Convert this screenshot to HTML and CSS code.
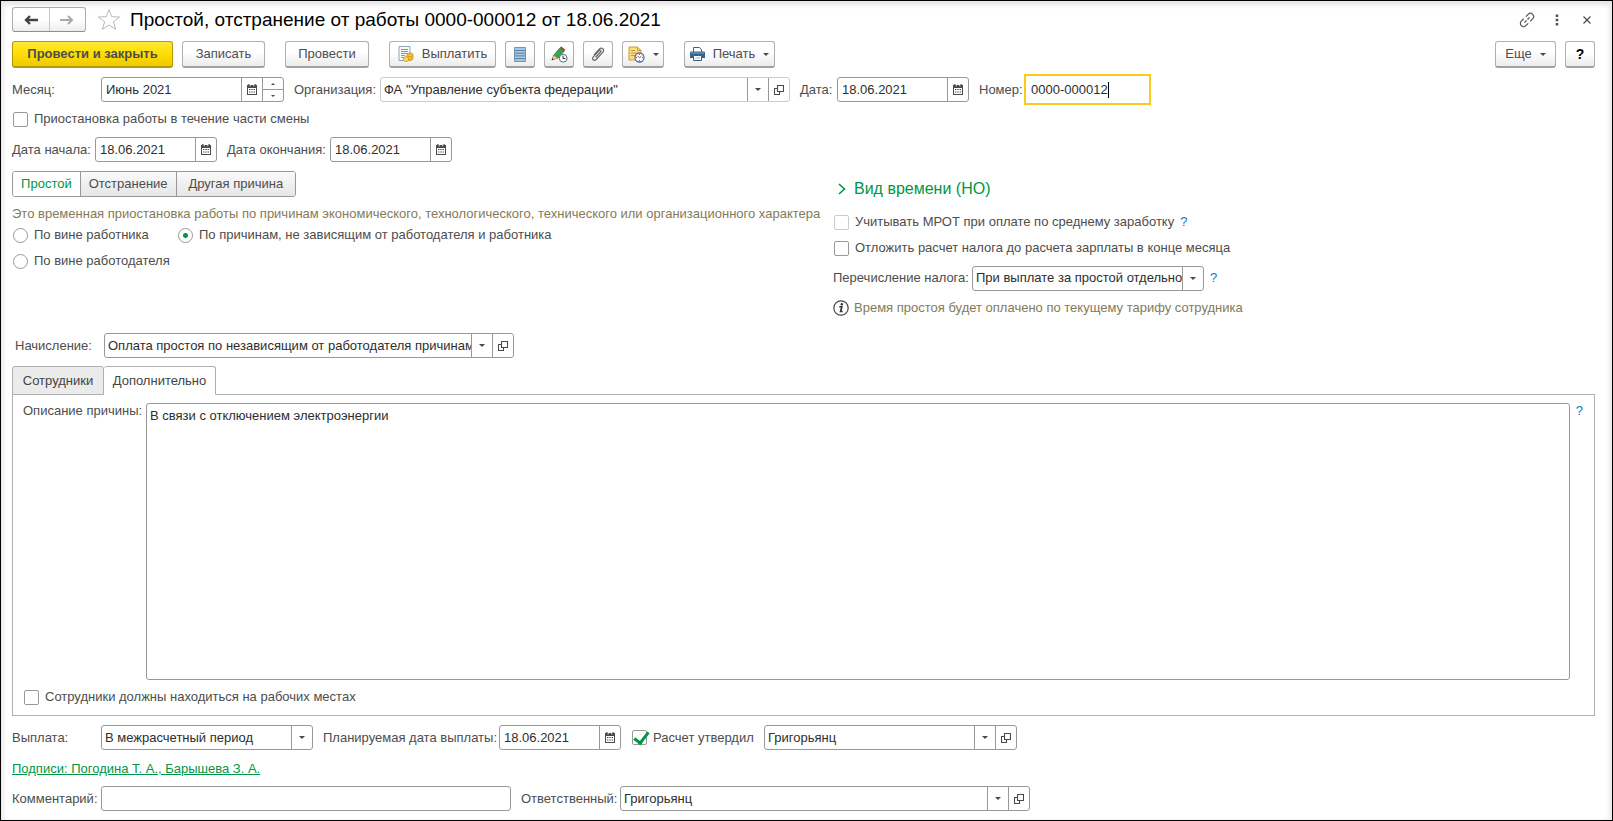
FILE: index.html
```html
<!DOCTYPE html>
<html lang="ru">
<head>
<meta charset="utf-8">
<title>Простой, отстранение от работы 0000-000012 от 18.06.2021</title>
<link rel="stylesheet" href="styles.css">
</head>
<body>
<svg class="sprite" aria-hidden="true">
  <symbol id="cal" viewBox="0 0 10 11"><path d="M0 1h10v10H0z" fill="#4a4a4a"/><path d="M1 4h8v6H1z" fill="#fff"/><path d="M2 0v3M8 0v3" stroke="#4a4a4a" stroke-width="1.4"/><path d="M3.2 0v2.4M6.8 0v2.4" stroke="#fff" stroke-width=".8"/><path d="M2 5.5h1.4M4.3 5.5h1.4M6.6 5.5H8M2 8h1.4M4.3 8h1.4M6.6 8H8" stroke="#4a4a4a" stroke-width="1.2"/></symbol>
  <symbol id="open" viewBox="0 0 10 10"><path d="M3.500 .5h6v6h-6zM3 3.500H.5v6h5V7" fill="none" stroke="#4a4a4a" stroke-width="1.100"/></symbol>
  <symbol id="down" viewBox="0 0 6 3"><path d="M0 0h6L3 3z" fill="#4a4a4a"/></symbol>
  <symbol id="up" viewBox="0 0 6 3"><path d="M0 3h6L3 0z" fill="#4a4a4a"/></symbol>
</svg>
<main class="window">
  <header class="titlebar">
    <div class="nav">
      <button type="button" aria-label="Назад"><svg width="14" height="10" viewBox="0 0 14 10"><path d="M14 5H2M6 1 2 5l4 4" fill="none" stroke="#444" stroke-width="2.400"/></svg></button>
      <button type="button" aria-label="Вперед"><svg width="14" height="10" viewBox="0 0 14 10"><path d="M0 5h12M8 1l4 4-4 4" fill="none" stroke="#aaa" stroke-width="2"/></svg></button>
    </div>
    <button class="plain" type="button" aria-label="В избранное"><svg width="24" height="23" viewBox="0 0 24 23"><path d="M12 1.500l2.700 7.200 7.900.3-6.200 4.800 2.200 7.500L12 17l-6.600 4.300 2.200-7.500L1.400 9l7.900-.3z" fill="#fff" stroke="#b4bac0"/></svg></button>
    <h1>Простой, отстранение от работы 0000-000012 от 18.06.2021</h1>
    <div class="tools">
      <button class="plain" type="button" aria-label="Ссылка"><svg width="16" height="16" viewBox="0 0 16 16"><g fill="none" stroke="#555" stroke-width="1.200" transform="rotate(-45 8 8)"><path d="M6.500 4.800H3.200a3.200 3.200 0 0 0 0 6.400h3.300M9.500 4.800h3.300a3.200 3.200 0 0 1 0 6.400H9.500M4.500 8h2.800M8.700 8h2.800"/></g></svg></button>
      <button class="plain" type="button" aria-label="Меню"><svg width="4" height="12" viewBox="0 0 4 12"><path d="M.7.500h2.600v2.500H.7zM.7 4.700h2.600v2.500H.7zM.7 9h2.600v2.500H.7z" fill="#555"/></svg></button>
      <button class="plain" type="button" aria-label="Закрыть"><svg width="8" height="8" viewBox="0 0 8 8"><path d="M.5.500l7 7m0-7l-7 7" stroke="#444" stroke-width="1.100"/></svg></button>
    </div>
  </header>

  <div class="toolbar">
    <button class="btn main w-main" type="button">Провести и закрыть</button>
    <button class="btn w-btn" type="button">Записать</button>
    <button class="btn w-post split" type="button">Провести</button>
    <button class="btn w-pay split" type="button"><svg width="16" height="16" viewBox="0 0 16 16"><path d="M1 .5h11v14H1z" fill="#f7fafc" stroke="#8fa3b5"/><path d="M3 3.500h7M3 5.500h7M3 7.500h7M3 9.500h4M3 11.500h4" stroke="#7d98b0"/><path d="M9 8.500c0-2 6-2 6 0V13c-1 2-5 2-6 0z" fill="#f0bd2d" stroke="#c58f13" stroke-width=".7"/><path d="M5.500 12c0-1.600 5-1.600 5 0v2c0 2-5 2-5 0z" fill="#ffd84c" stroke="#c58f13" stroke-width=".7"/><path d="M9.500 10c1.500 1 4 1 5.200 0" stroke="#c58f13" fill="none" stroke-width=".7"/></svg>Выплатить</button>
    <button class="btn w-icon" type="button" aria-label="Список"><svg width="12" height="15" viewBox="0 0 12 15"><path d="M.5.500h11v14H.5z" fill="#a9c9e0" stroke="#6f97b5"/><path d="M1 3.500h10M1 6.200h10M1 8.900h10M1 11.600h10" stroke="#5683a5"/></svg></button>
    <button class="btn w-icon" type="button" aria-label="Изменить"><svg width="17" height="17" viewBox="0 0 17 17"><path d="M2.500 9.500L9 1.800l4.200 3.400L7 12z" fill="#3fa14b" stroke="#27803a" stroke-width=".8"/><path d="M9 1.800L10.300.5l4 3.200-1.100 1.500z" fill="#9b3b32"/><path d="M2.500 9l4.200 3.200L1 14z" fill="#efd09a" stroke="#936d38" stroke-width=".6"/><path d="M.6 14.300l.8-2.300 1.600 1.500z" fill="#333"/><circle cx="12.200" cy="12.200" r="3.900" fill="#fff" stroke="#4f7184"/><path d="M12 9.700v2.800h2.300" fill="none" stroke="#333"/></svg></button>
    <button class="btn w-icon" type="button" aria-label="Файлы"><svg width="14" height="15" viewBox="0 0 14 15"><path d="M4.500 10.500l5-5.500c1.200-1.300-.2-2.600-1.400-1.400L2.300 9.800c-2 2.300.8 4.800 2.900 2.700l6.500-7.100c2.400-2.700-.9-5.900-3.500-3.200L3 7.800" fill="none" stroke="#666" stroke-width="1.200"/></svg></button>
    <button class="btn w-drop" type="button" aria-label="Задача"><svg width="17" height="17" viewBox="0 0 17 17"><path d="M1 1h8.500l3.500 3.500V14H1z" fill="#f9dd83" stroke="#c99b36"/><path d="M9.500 1v3.500H13M3 4.500h4M3 7h7M3 9.500h4" fill="none" stroke="#c99b36"/><circle cx="11.500" cy="11.500" r="4.500" fill="#fff" stroke="#4774b5" stroke-width="1.300"/><path d="M11.500 8v1M11.500 14v1M8 11.500h1M14 11.500h1" stroke="#4774b5"/><path d="M11.500 11.800l-1.800-2M11.500 11.800l2-1.800" stroke="#d33"/></svg><svg class="tri" width="6" height="3"><use href="#down"/></svg></button>
    <button class="btn w-print split" type="button"><svg width="15" height="14" viewBox="0 0 15 14"><path d="M3.500.500h6l2 2V6h-8z" fill="#fff" stroke="#376188"/><path d="M1 4.500h13q1 0 1 1V11H0V5.500q0-1 1-1z" fill="#37648e"/><path d="M1 6h13" stroke="#7fa3c2"/><path d="M3.500 8.500h8v5h-8z" fill="#fff" stroke="#376188"/><path d="M5 11h5" stroke="#a9b9c8"/></svg>Печать<svg class="tri" width="6" height="3"><use href="#down"/></svg></button>
    <span class="grow"></span>
    <button class="btn w-more" type="button">Еще<svg class="tri" width="6" height="3"><use href="#down"/></svg></button>
    <button class="btn w-icon help-btn" type="button">?</button>
  </div>

  <div class="row">
    <label class="lab" for="month">Месяц:</label>
    <div class="field f-month"><input id="month" value="Июнь 2021"><button type="button" aria-label="Календарь"><svg width="10" height="11"><use href="#cal"/></svg></button><span class="spin"><button type="button" aria-label="Больше"><svg width="4" height="2" viewBox="0 0 4 2"><path d="M0 2h4L2 0z" fill="#4a4a4a"/></svg></button><button type="button" aria-label="Меньше"><svg width="4" height="2" viewBox="0 0 4 2"><path d="M0 0h4L2 2z" fill="#4a4a4a"/></svg></button></span></div>
    <label class="l-org" for="org">Организация:</label>
    <div class="field f-wide pale"><span class="pick"><select id="org"><option>ФА "Управление субъекта федерации"</option></select><svg width="6" height="3"><use href="#down"/></svg></span><button type="button" aria-label="Открыть"><svg width="10" height="10"><use href="#open"/></svg></button></div>
    <label class="l-date" for="date">Дата:</label>
    <div class="field f-docdate"><input id="date" value="18.06.2021"><button type="button" aria-label="Календарь"><svg width="10" height="11"><use href="#cal"/></svg></button></div>
    <label class="l-num" for="num">Номер:</label>
    <div class="focus"><input id="num" value="0000-000012" size="10"><i class="caret"></i></div>
  </div>

  <div class="row check-row"><label class="check"><input type="checkbox">Приостановка работы в течение части смены</label></div>

  <div class="row dates">
    <label class="l-from" for="from">Дата начала:</label>
    <div class="field f-date"><input id="from" value="18.06.2021"><button type="button" aria-label="Календарь"><svg width="10" height="11"><use href="#cal"/></svg></button></div>
    <label class="l-to" for="to">Дата окончания:</label>
    <div class="field f-date"><input id="to" value="18.06.2021"><button type="button" aria-label="Календарь"><svg width="10" height="11"><use href="#cal"/></svg></button></div>
  </div>

  <div class="columns">
    <section class="reason">
      <div class="segments"><button class="on" type="button">Простой</button><button type="button">Отстранение</button><button type="button">Другая причина</button></div>
      <p class="note">Это временная приостановка работы по причинам экономического, технологического, технического или организационного характера</p>
      <div class="radios">
        <label class="check"><input type="radio" name="fault">По вине работника</label>
        <label class="check"><input type="radio" name="fault" checked>По причинам, не зависящим от работодателя и работника</label>
        <label class="check"><input type="radio" name="fault">По вине работодателя</label>
      </div>
    </section>
    <section class="options">
      <h2><button class="plain" type="button"><svg width="8" height="12" viewBox="0 0 8 12"><path d="M1 1l5.500 5L1 11" fill="none" stroke="#009646" stroke-width="1.600"/></svg>Вид времени (НО)</button></h2>
      <div class="line"><label class="check"><input type="checkbox" disabled>Учитывать МРОТ при оплате по среднему заработку</label><a href="#" class="hint">?</a></div>
      <div class="line"><label class="check"><input type="checkbox">Отложить расчет налога до расчета зарплаты в конце месяца</label></div>
      <div class="line tall"><label class="l-tax" for="tax">Перечисление налога:</label><div class="field f-tax"><span class="pick"><select id="tax"><option>При выплате за простой отдельно</option></select><svg width="6" height="3"><use href="#down"/></svg></span></div><a href="#" class="hint">?</a></div>
      <div class="line info"><svg width="16" height="16" viewBox="0 0 16 16"><circle cx="8" cy="8" r="7.200" fill="#fff" stroke="#444" stroke-width="1.200"/><circle cx="8.800" cy="4.300" r="1.200" fill="#333"/><path d="M6.300 6.800h2.500L7.600 11.500h2" fill="none" stroke="#333" stroke-width="1.600"/></svg>Время простоя будет оплачено по текущему тарифу сотрудника</div>
    </section>
  </div>

  <div class="row accrual">
    <label class="lab" for="accrual">Начисление:</label>
    <div class="field f-wide"><span class="pick"><select id="accrual"><option>Оплата простоя по независящим от работодателя причинам</option></select><svg width="6" height="3"><use href="#down"/></svg></span><button type="button" aria-label="Открыть"><svg width="10" height="10"><use href="#open"/></svg></button></div>
  </div>

  <div class="tabs"><button class="t-staff" type="button">Сотрудники</button><button class="t-extra on" type="button">Дополнительно</button></div>
  <section class="panel">
    <div class="describe">
      <label for="desc">Описание причины:</label>
      <textarea id="desc">В связи с отключением электроэнергии</textarea>
      <a href="#" class="hint">?</a>
    </div>
    <label class="check"><input type="checkbox">Сотрудники должны находиться на рабочих местах</label>
  </section>

  <div class="row">
    <label class="lab" for="pay">Выплата:</label>
    <div class="field f-pay"><span class="pick"><select id="pay"><option>В межрасчетный период</option></select><svg width="6" height="3"><use href="#down"/></svg></span></div>
    <label class="l-plan" for="plan">Планируемая дата выплаты:</label>
    <div class="field f-date"><input id="plan" value="18.06.2021"><button type="button" aria-label="Календарь"><svg width="10" height="11"><use href="#cal"/></svg></button></div>
    <label class="check l-ok"><input type="checkbox" checked>Расчет утвердил</label>
    <div class="field f-appr"><span class="pick"><select aria-label="Расчет утвердил"><option>Григорьянц</option></select><svg width="6" height="3"><use href="#down"/></svg></span><button type="button" aria-label="Открыть"><svg width="10" height="10"><use href="#open"/></svg></button></div>
  </div>
  <a href="#" class="sign">Подписи: Погодина Т. А., Барышева З. А.</a>
  <div class="row">
    <label class="lab" for="comment">Комментарий:</label>
    <div class="field f-wide"><input id="comment"></div>
    <label class="l-resp" for="resp">Ответственный:</label>
    <div class="field f-wide"><span class="pick"><select id="resp"><option>Григорьянц</option></select><svg width="6" height="3"><use href="#down"/></svg></span><button type="button" aria-label="Открыть"><svg width="10" height="10"><use href="#open"/></svg></button></div>
  </div>
</main>
</body>
</html>
```

FILE: styles.css
```css
* { box-sizing: border-box; }
body { margin: 0; background: #fff; }
body, button, input, select, textarea { font: 13px/16px "Liberation Sans", Arial, sans-serif; color: #4d4d4d; }
.sprite { position: absolute; width: 0; height: 0; }
svg { display: block; flex: none; }
button { padding: 0; margin: 0; cursor: pointer; }
label { white-space: nowrap; flex: none; }

.window {
  min-height: 100vh;
  display: flex;
  flex-direction: column;
  padding: 6px 17px 9px 11px;
  border: 1px solid #000;
  box-shadow: inset 0 7px 5px -3px #e6e4e6, inset 4px 0 4px -1px #eeecee, inset -4px 0 4px -1px #e9e9ef;
}
.plain { border: 0; background: none; display: flex; align-items: center; }

.titlebar { display: flex; align-items: center; height: 25px; }
.nav { display: flex; height: 25px; width: 74px; border: 1px solid #adadad; border-bottom-color: #8f8f8f; border-radius: 3px; background: linear-gradient(#fff 50%, #ededed); }
.nav button { flex: 1; display: flex; align-items: center; justify-content: center; border: 0; background: none; }
.nav button + button { border-left: 1px solid #c8c8c8; }
.titlebar > .plain { margin-left: 11px; }
h1 { margin: 0 0 0 9px; font-size: 19px; line-height: 24px; font-weight: 400; color: #000; white-space: nowrap; }
.tools { display: flex; align-items: center; gap: 20px; margin-left: auto; padding-right: 4px; }
.tools .plain:last-child { margin-left: 4px; }

.toolbar { display: flex; gap: 9px; margin-top: 9px; }
.btn { display: flex; align-items: center; justify-content: center; gap: 8px; height: 27px; flex: none; border: 1px solid #b0b0b0; border-bottom: 2px solid #a0a0a0; border-radius: 3px; background: linear-gradient(#fff 40%, #ececec); }
.btn.main { background: linear-gradient(#ffe834, #fddc00 55%, #ecca00); border-color: #b39a0b; font-weight: 700; }
.split { margin-left: 11px; }
.w-main { width: 161px; }
.w-btn { width: 83px; }
.w-post { width: 84px; }
.w-pay { width: 107px; }
.w-icon { width: 30px; }
.w-drop { width: 42px; }
.w-print { width: 91px; }
.w-more { width: 61px; }
.help-btn { color: #000; font-weight: 700; font-size: 14px; }
.grow { flex: 1; }

.row { display: flex; align-items: center; height: 25px; margin-top: 9px; flex: none; }
.row .field + label { margin-left: 10px; }
.lab { width: 89px; }
.l-org { width: 86px; }
.l-date { width: 37px; }
.l-num { width: 45px; }
.l-from { width: 83px; }
.l-to { width: 103px; }
.l-plan { width: 176px; }
.l-resp { width: 99px; }
.l-ok { width: 133px; }
.l-tax { width: 139px; }

.field { display: flex; height: 25px; flex: none; border: 1px solid #999; border-radius: 3px; background: #fff; overflow: hidden; }
.pale { border-color: #ccc; }
.field > input, .pick { flex: 1; min-width: 0; }
.field input, select { border: 0; outline: 0; background: none; color: #2e2e2e; padding: 0 4px; height: 100%; }
.field > button { width: 21px; flex: none; border: 0; border-left: 1px solid #999; background: none; display: flex; align-items: center; justify-content: center; }
.pick { display: grid; grid-template-columns: minmax(0, 1fr) 21px; }
.pick select { grid-area: 1 / 1; appearance: none; min-width: 0; width: 100%; padding: 0 0 0 3px; }
.pick svg { grid-area: 1 / 2; place-self: center; }
.pick::after { content: ""; grid-area: 1 / 2; border-left: 1px solid #999; pointer-events: none; }
.spin { width: 21px; display: flex; flex-direction: column; border-left: 1px solid #999; }
.spin button { flex: 1; border: 0; background: none; display: flex; align-items: center; justify-content: center; }
.spin button + button { border-top: 1px solid #999; }
.f-month { width: 183px; }
.f-wide { width: 410px; }
.f-docdate { width: 132px; }
.f-date { width: 122px; }
.f-tax { width: 232px; }
.f-pay { width: 212px; }
.f-appr { width: 253px; }
.focus { display: flex; align-items: center; width: 127px; height: 31px; border: 2px solid #fbcb1b; padding-left: 5px; }
.focus input { border: 0; outline: 0; padding: 0; background: none; color: #2e2e2e; field-sizing: content; }
.caret { width: 1px; height: 16px; background: #000; }

.check { display: flex; align-items: center; gap: 6px; }
.check input { appearance: none; flex: none; width: 15px; height: 15px; margin: 0 0 0 1px; border: 1px solid #999; border-radius: 2px; background: #fff; }
.check input[type="radio"] { border-radius: 50%; }
.check input[type="radio"]:checked { background: radial-gradient(circle, #009646 2px, #fff 3px); }
.check input:disabled { border-color: #ccc; }
.check input[type="checkbox"]:checked { position: relative; }
.check input[type="checkbox"]:checked::after { content: ""; position: absolute; left: 4px; top: -2px; width: 6px; height: 12px; border: solid #009646; border-width: 0 3px 3px 0; transform: rotate(38deg); }
.check-row { height: 16px; }
.dates { margin-top: 10px; }

.columns { display: flex; gap: 20px; margin-top: 9px; height: 154px; flex: none; }
.reason { width: 801px; flex: none; }
.segments { display: flex; height: 26px; width: 284px; border: 1px solid #999; border-radius: 3px; overflow: hidden; }
.segments button { flex: 88 1 0; border: 0; border-left: 1px solid #999; background: linear-gradient(#fafafa, #e6e6e6); }
.segments button:first-child { flex-grow: 62; border-left: 0; }
.segments button:last-child { flex-grow: 110; }
.segments .on { background: #fff; color: #009646; }
.note { margin: 9px 0 0; color: #857a58; white-space: nowrap; }
.radios { display: grid; grid-template-columns: 165px 1fr; row-gap: 10px; margin-top: 5px; }
h2 { margin: 6px 0 8px; font-size: 16px; font-weight: 400; }
h2 .plain { font-size: 16px; line-height: 24px; color: #009646; gap: 8px; padding-left: 5px; }
.options .line { display: flex; align-items: center; height: 26px; white-space: nowrap; }
.options .tall { height: 34px; }
.options .info { gap: 5px; color: #857a58; }
.hint { color: #0a78c8; text-decoration: none; margin-left: 6px; }

.accrual { margin-top: 8px; padding-left: 3px; }
.tabs { display: flex; margin-top: 8px; height: 29px; flex: none; position: relative; margin-bottom: -1px; }
.tabs button { border: 1px solid #b0b0b0; border-radius: 3px 3px 0 0; background: #ebebeb; color: #444; }
.tabs .on { background: #fff; border-left: 0; border-bottom-color: #fff; }
.t-staff { width: 92px; }
.t-extra { width: 112px; }
.panel { flex: 1; display: flex; flex-direction: column; border: 1px solid #b0b0b0; padding: 8px 11px 10px 10px; }
.describe { flex: 1; display: flex; align-items: stretch; margin-bottom: 9px; }
.describe label { width: 123px; }
.describe textarea { flex: 1; resize: none; outline: 0; border: 1px solid #999; border-radius: 3px; padding: 4px 3px; color: #2e2e2e; background: #fff; }
.sign { color: #009646; margin-top: 11px; align-self: flex-start; }
```
